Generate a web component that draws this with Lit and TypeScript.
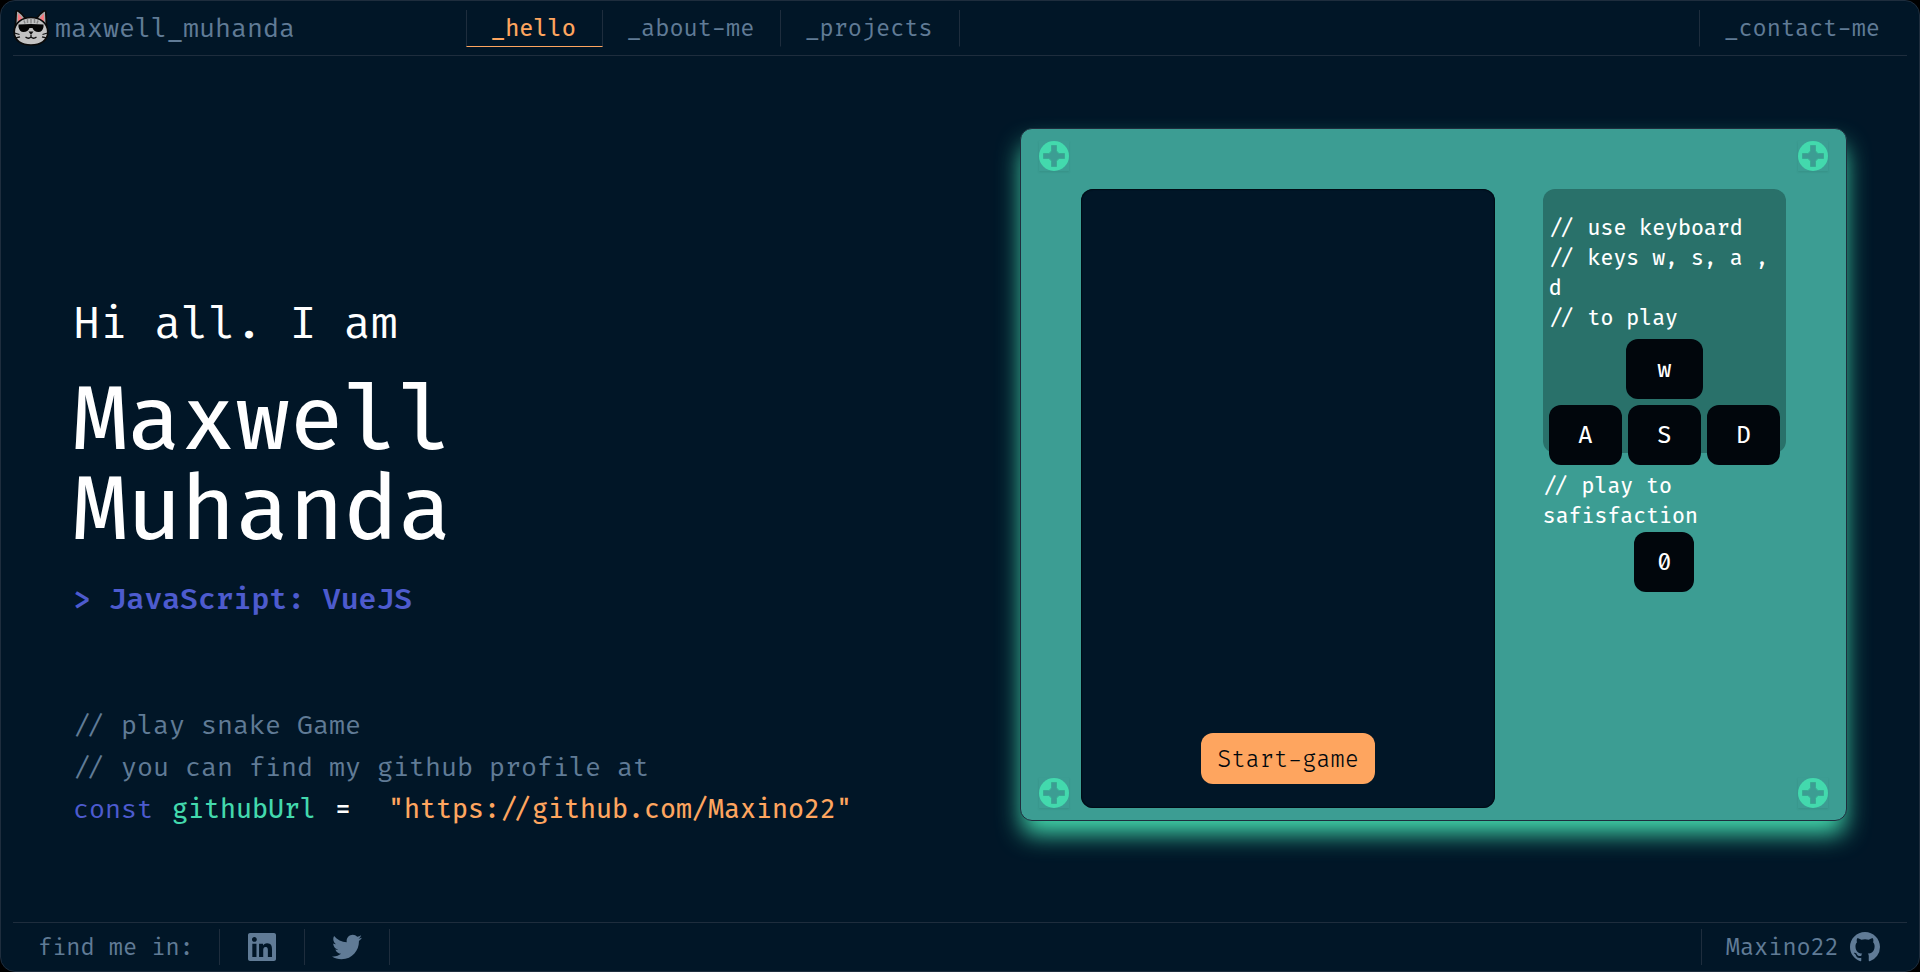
import { LitElement, html, css, svg } from "lit";
import { customElement, property } from "lit/decorators.js";
import { classMap } from "lit/directives/class-map.js";

const LINKEDIN =
  "M416 32H31.9C14.3 32 0 46.5 0 64.3v383.4C0 465.5 14.3 480 31.9 480H416c17.6 0 32-14.5 32-32.3V64.3c0-17.8-14.4-32.3-32-32.3zM135.4 416H69V202.2h66.5V416zm-33.2-243c-21.3 0-38.5-17.3-38.5-38.5S80.9 96 102.2 96c21.2 0 38.5 17.3 38.5 38.5 0 21.3-17.2 38.5-38.5 38.5zm282.1 243h-66.4V312c0-24.8-.5-56.7-34.5-56.7-34.6 0-39.9 27-39.9 54.9V416h-66.4V202.2h63.7v29.2h.9c8.9-16.8 30.6-34.5 62.9-34.5 67.2 0 79.7 44.3 79.7 101.9V416z";
const TWITTER =
  "M459.37 151.716c.325 4.548.325 9.097.325 13.645 0 138.72-105.583 298.558-298.558 298.558-59.452 0-114.68-17.219-161.137-47.106 8.447.974 16.568 1.299 25.34 1.299 49.055 0 94.213-16.568 130.274-44.832-46.132-.975-84.792-31.188-98.112-72.772 6.498.974 12.995 1.624 19.818 1.624 9.421 0 18.843-1.3 27.614-3.573-48.081-9.747-84.143-51.98-84.143-102.985v-1.299c13.969 7.797 30.214 12.67 47.431 13.319-28.264-18.843-46.781-51.005-46.781-87.391 0-19.492 5.197-37.36 14.294-52.954 51.655 63.675 129.3 105.258 216.365 109.807-1.624-7.797-2.599-15.918-2.599-24.04 0-57.828 46.782-104.934 104.934-104.934 30.213 0 57.502 12.67 76.67 33.137 23.715-4.548 46.456-13.32 66.599-25.34-7.798 24.366-24.366 44.833-46.132 57.827 21.117-2.273 41.584-8.122 60.426-16.243-14.292 20.791-32.161 39.308-52.628 54.253z";
const GITHUB =
  "M8 0C3.58 0 0 3.58 0 8c0 3.54 2.29 6.53 5.47 7.59.4.07.55-.17.55-.38 0-.19-.01-.82-.01-1.49-2.01.37-2.53-.49-2.69-.94-.09-.23-.48-.94-.82-1.13-.28-.15-.68-.52-.01-.53.63-.01 1.08.58 1.23.82.72 1.21 1.87.87 2.33.66.07-.52.28-.87.51-1.07-1.78-.2-3.64-.89-3.64-3.95 0-.87.31-1.59.82-2.15-.08-.2-.36-1.02.08-2.12 0 0 .67-.21 2.2.82.64-.18 1.32-.27 2-.27.68 0 1.36.09 2 .27 1.53-1.04 2.2-.82 2.2-.82.44 1.1.16 1.92.08 2.12.51.56.82 1.27.82 2.15 0 3.07-1.87 3.75-3.65 3.95.29.25.54.73.54 1.48 0 1.07-.01 1.93-.01 2.2 0 .21.15.46.55.38A8.013 8.013 0 0016 8c0-4.42-3.58-8-8-8z";

const catFace = svg`
  <path d="M2.500 16 L3.200 2 Q3.700 .3 5.200 1 Q9 3.500 12 8 H24 Q27 3.500 30.800 1 Q32.300 .3 32.800 2 L33.500 16Z" fill="#a9a9a9" stroke="#0a0a0a" stroke-width="1.700"/>
  <path d="M5 13 L5 3.500 Q8 6 10 9.500Z M31 13 L31 3.500 Q28 6 26 9.500Z" fill="#f87a80"/>
  <path d="M18 7.500 C27 7.500 34.800 13 34.800 22 C34.800 31 27 35 18 35 C9 35 1.200 31 1.200 22 C1.200 13 9 7.500 18 7.500Z" fill="#c3c3c3" stroke="#0a0a0a" stroke-width="1.700"/>
  <path d="M18 8.500v5 M14.500 9v4 M21.500 9v4 M11 10.500l1 3 M25 10.500l-1 3" stroke="#858585" stroke-width="1.500"/>
  <path d="M5.500 14.500 Q18 13.500 30.500 14.500 V17 Q29.500 22 25.500 22 Q21 22 19.500 18 H16.500 Q15 22 10.500 22 Q6.500 22 5.500 17Z" fill="#050505"/>
  <path d="M15.500 21.500h5l-2.500 3.500z" fill="#111"/>
  <path d="M18 25v2 M12.500 27q3 2.500 5.500 0 q2.500 2.500 5.500 0 M1.500 23l5 1.500 M2.500 28l4.500-1.200 M34.500 23l-5 1.500 M33.500 28l-4.500-1.200" fill="none" stroke="#111" stroke-width="1.300"/>`;

@customElement("nav-tab")
export class NavTab extends LitElement {
  @property() label = "";
  @property({ type: Boolean }) active = false;
  @property({ type: Boolean }) leading = false;
  @property({ type: Boolean }) last = false;

  static styles = css`
    :host { display: flex; }
    .tab {
      display: flex;
      align-items: center;
      box-sizing: border-box;
      height: 37px;
      padding: 2px 26px 0 24px;
      border-right: 1px solid #1e2d3d;
      border-bottom: 1px solid transparent;
      color: #607b96;
      text-decoration: none;
      font-size: 23px;
      line-height: 34px;
    }
    .leading { border-left: 1px solid #1e2d3d; }
    .active { color: #fea55f; border-bottom-color: #fea55f; font-weight: 450; }
    .last { border-right-color: transparent; }
  `;

  render() {
    return html`<a
      href="#${this.label.slice(1)}"
      class=${classMap({ tab: true, leading: this.leading, active: this.active, last: this.last })}
      >${this.label}</a
    >`;
  }
}

@customElement("panel-screw")
export class PanelScrew extends LitElement {
  static styles = css`
    :host { display: block; width: 30px; height: 30px; }
    .screw { display: block; width: 30px; height: 30px; box-shadow: 0 1px 2px rgba(30, 90, 85, 0.2); }
  `;
  render() {
    return html`<svg class="screw" viewBox="0 0 30 30" aria-hidden="true">
      <circle cx="15" cy="15" r="15" fill="#43d9ad" />
      <path
        d="M12.500 4.500h5v5q.5 2.500 3 3h5v5h-5q-2.500 .5-3 3v5h-5v-5q-.5-2.500-3-3h-5v-5h5q2.500-.5 3-3z"
        fill="#3c9d93"
        stroke="#38ab93"
        stroke-width="1"
      />
    </svg>`;
  }
}

@customElement("snake-console")
export class SnakeConsole extends LitElement {
  static styles = css`
    :host { display: block; }
    .panel {
      display: grid;
      grid-template-columns: 30px minmax(0, 1fr) 30px;
      column-gap: 12px;
      padding: 12px 18px;
      border: 1px solid #1e2d3d;
      border-radius: 12px;
      background: #3c9d93;
      box-shadow: 0 15px 24px -2px #43d9ad;
    }
    .rail { display: flex; flex-direction: column; justify-content: space-between; }
    .content {
      display: grid;
      grid-template-columns: 1.7fr 1fr;
      column-gap: 48px;
      padding-top: 48px;
    }
    .screen {
      display: flex;
      align-items: flex-end;
      justify-content: center;
      box-sizing: border-box;
      min-height: 619px;
      padding-bottom: 24px;
      border-radius: 12px;
      background: #011627;
      box-shadow: inset 0 0 1px 1px #010c15;
    }
    button { border: 0; padding: 0; border-radius: 12px; font-family: inherit; font-size: 23px; line-height: 34px; }
    .start { height: 51px; padding: 2px 16px 0; background: #fea55f; color: #01080e; font-weight: 300; }
    .side { font-size: 21px; line-height: 30px; color: #fff; font-weight: 450; }
    .help { box-sizing: border-box; height: 264px; padding: 25px 6px 0; border-radius: 12px; background: #29716a; }
    p { margin: 0; }
    .keys { display: grid; grid-template-columns: repeat(3, 1fr); gap: 6px; padding-top: 5px; }
    .key { height: 60px; padding-top: 2px; background: #01060c; color: #fff; font-weight: 450; }
    .up { grid-column: 1 / -1; justify-self: center; width: 77px; }
    .score { padding-top: 19px; display: flex; flex-direction: column; }
    .count { width: 60px; align-self: center; }
  `;

  render() {
    return html`<section class="panel" aria-label="Snake game">
      <div class="rail"><panel-screw></panel-screw><panel-screw></panel-screw></div>
      <div class="content">
        <div class="screen"><button class="start">Start-game</button></div>
        <div class="side">
          <div class="help">
            <p>// use keyboard</p>
            <p>// keys w, s, a , d</p>
            <p>// to play</p>
            <div class="keys">
              <button class="key up">w</button>
              <button class="key">A</button>
              <button class="key">S</button>
              <button class="key">D</button>
            </div>
          </div>
          <div class="score">
            <p>// play to safisfaction</p>
            <button class="key count">0</button>
          </div>
        </div>
      </div>
      <div class="rail"><panel-screw></panel-screw><panel-screw></panel-screw></div>
    </section>`;
  }
}

@customElement("app-root")
export class AppRoot extends LitElement {
  static styles = css`
    :host {
      display: block;
      background: #000;
      font-family: "Fira Code", "Liberation Mono", monospace;
      color: #607b96;
    }
    .frame {
      display: flex;
      flex-direction: column;
      box-sizing: border-box;
      min-height: 100vh;
      padding: 0 12px;
      border: 1px solid #1e2d3d;
      border-radius: 15px;
      background: #011627;
    }
    a { color: inherit; text-decoration: none; }
    .top {
      display: grid;
      grid-template-columns: 453px 1fr auto;
      align-items: center;
      height: 54px;
      border-bottom: 1px solid #1e2d3d;
    }
    .brand { display: flex; align-items: center; gap: 6px; font-size: 26px; line-height: 36px; }
    .label { padding-top: 2px; }
    .cat { width: 36px; height: 36px; }
    .tabs { display: flex; }
    main {
      flex: 1;
      display: grid;
      grid-template-columns: minmax(0, 1fr) minmax(0, 46.6%);
      align-items: start;
      padding: 72px 60px 60px;
    }
    .intro { padding-top: 167px; }
    .hi { margin: 0; font-size: 44px; line-height: 60px; color: #fff; }
    h1 { margin: 22px 0 0; max-width: 480px; font-size: 88px; line-height: 90px; font-weight: 450; color: #fff; }
    h2 { margin: 22px 0 84px; font-size: 29px; line-height: 42px; font-weight: 600; color: #4d5bce; }
    .code { margin: 0; font-size: 26px; line-height: 42px; }
    .decl { display: flex; gap: 19px; }
    .kw { color: #4d5bce; }
    .id { color: #43d9ad; font-weight: 450; }
    .eq { color: #fff; font-weight: 500; }
    .str { color: #fea55f; font-weight: 450; padding-left: 18px; }
    .bottom {
      display: flex;
      justify-content: space-between;
      align-items: center;
      height: 48px;
      border-top: 1px solid #1e2d3d;
      font-size: 23px;
      line-height: 34px;
    }
    .group { display: flex; }
    .cell {
      display: flex;
      align-items: center;
      justify-content: center;
      gap: 11px;
      height: 36px;
      padding: 0 25px;
      border-right: 1px solid #1e2d3d;
    }
    .social { padding: 0 27px; }
    .profile { padding: 0 27px 0 24px; border-right: 0; border-left: 1px solid #1e2d3d; }
    .icon { width: 30px; height: 30px; fill: currentColor; }
  `;

  render() {
    return html`<div class="frame">
      <header class="top">
        <a class="brand" href="#home"
          ><svg class="cat" viewBox="0 0 36 36" aria-hidden="true">${catFace}</svg
          ><span class="label">maxwell_muhanda</span></a
        >
        <nav class="tabs">
          <nav-tab label="_hello" active leading></nav-tab>
          <nav-tab label="_about-me"></nav-tab>
          <nav-tab label="_projects"></nav-tab>
        </nav>
        <nav-tab label="_contact-me" leading last></nav-tab>
      </header>
      <main>
        <div class="intro">
          <p class="hi">Hi all. I am</p>
          <h1>Maxwell Muhanda</h1>
          <h2>&gt; JavaScript: VueJS</h2>
          <p class="code">// play snake Game</p>
          <p class="code">// you can find my github profile at</p>
          <p class="code decl">
            <span class="kw">const</span><span class="id">githubUrl</span><span class="eq">=</span
            ><a class="str" href="https://github.com/Maxino22">"https://github.com/Maxino22"</a>
          </p>
        </div>
        <snake-console></snake-console>
      </main>
      <footer class="bottom">
        <div class="group">
          <span class="cell"><span class="label">find me in:</span></span>
          <a class="cell social" href="#linkedin" aria-label="LinkedIn"
            ><svg class="icon" viewBox="-16 16 480 480"><path d=${LINKEDIN} /></svg
          ></a>
          <a class="cell social" href="#twitter" aria-label="Twitter"
            ><svg class="icon" viewBox="0 0 512 512"><path d=${TWITTER} /></svg
          ></a>
        </div>
        <a class="cell profile" href="https://github.com/Maxino22"
          ><span class="label">Maxino22</span
          ><svg class="icon" viewBox="0 0 16 16" aria-hidden="true"><path d=${GITHUB} /></svg
        ></a>
      </footer>
    </div>`;
  }
}
